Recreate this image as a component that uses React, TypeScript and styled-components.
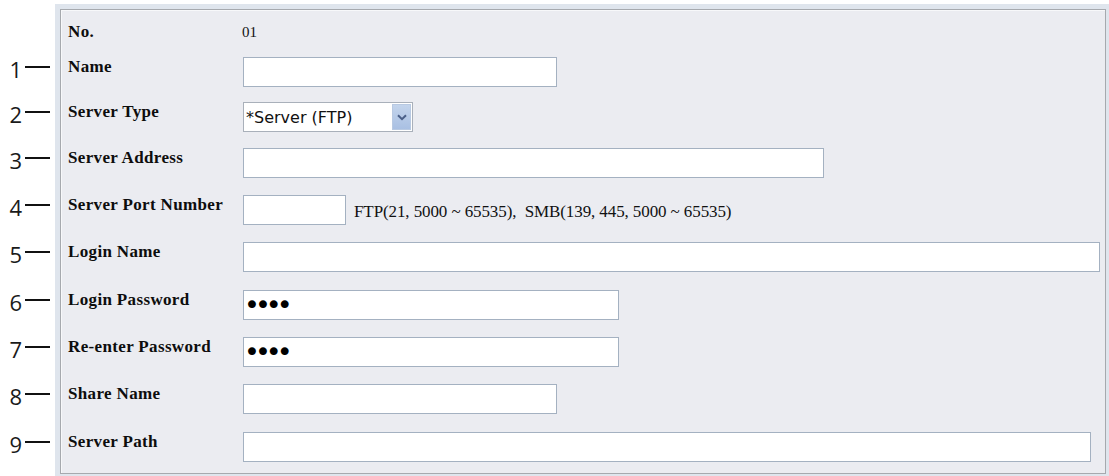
import React from "react";
import styled, { createGlobalStyle } from "styled-components";

const GlobalStyle = createGlobalStyle`
  html, body { margin: 0; padding: 0; background: #ffffff; }
  body { width: 1109px; height: 476px; overflow: hidden; }
  * { box-sizing: border-box; }
`;

type Kind = "text" | "select" | "password";

interface RowData {
  n: number;
  label: string;
  kind: Kind;
  width: number;
  h: number;
  value?: string;
  hint?: string;
}

const rows: RowData[] = [
  { n: 1, label: "Name", kind: "text", width: 314, h: 45 },
  { n: 2, label: "Server Type", kind: "select", width: 170, h: 46 },
  { n: 3, label: "Server Address", kind: "text", width: 581, h: 47 },
  {
    n: 4,
    label: "Server Port Number",
    kind: "text",
    width: 103,
    h: 47,
    hint: "FTP(21, 5000 ~ 65535),  SMB(139, 445, 5000 ~ 65535)",
  },
  { n: 5, label: "Login Name", kind: "text", width: 857, h: 48 },
  { n: 6, label: "Login Password", kind: "password", width: 376, h: 47, value: "pass" },
  { n: 7, label: "Re-enter Password", kind: "password", width: 376, h: 47, value: "pass" },
  { n: 8, label: "Share Name", kind: "text", width: 314, h: 48 },
  { n: 9, label: "Server Path", kind: "text", width: 848, h: 30 },
];

const Page = styled.div`
  display: flex;
  align-items: flex-start;
  width: 1109px;
  height: 476px;
`;

const MarkerColumn = styled.div`
  width: 55px;
  flex: none;
  padding-top: 57px;
  display: flex;
  flex-direction: column;
`;

const Marker = styled.div<{ $h: number }>`
  height: ${(p) => p.$h}px;
  display: flex;
  align-items: flex-start;
  justify-content: flex-end;
  padding-right: 5px;
`;

const MarkerInner = styled.div`
  height: 20px;
  display: flex;
  align-items: center;
  gap: 4px;
`;

const MarkerNum = styled.span`
  font-family: "Open Sans", "Noto Sans", sans-serif;
  font-size: 22px;
  line-height: 24px;
  color: #1a1a1a;
  margin-top: 3px;
  margin-right: -1px;
`;

const Dash = styled.span`
  display: block;
  width: 25px;
  height: 2px;
  background: #111111;
`;

const Frame = styled.div`
  flex: 1;
  margin-top: 4px;
  padding: 5px 3px 3px 5px;
  background: #dfe5ed;
`;

const Panel = styled.div`
  height: 465px;
  background: #ebecf1;
  border: 1px solid #a6a9ae;
  box-shadow: inset 1px 1px 0 #f7f8fa;
  padding: 12px 0 0 7px;
  display: flex;
  flex-direction: column;
`;

const Row = styled.div<{ $h: number }>`
  height: ${(p) => p.$h}px;
  display: grid;
  grid-template-columns: 175px 1fr;
  align-items: start;
`;

const Label = styled.div`
  font-family: "Liberation Serif", "Times New Roman", serif;
  font-weight: bold;
  font-size: 17px;
  line-height: 20px;
  letter-spacing: 0.35px;
  color: #0d0d0d;
  white-space: nowrap;
`;

const Value = styled.div`
  font-family: "Liberation Serif", "Times New Roman", serif;
  font-size: 15px;
  line-height: 20px;
  color: #111111;
  margin-left: -1px;
`;

const Field = styled.div`
  display: flex;
  align-items: center;
  gap: 8px;
`;

const TextInput = styled.input<{ $w: number }>`
  width: ${(p) => p.$w}px;
  height: 30px;
  margin: 0;
  padding: 0 3px;
  background: #ffffff;
  border: 1px solid #a4b1c1;
  border-radius: 0;
  outline: none;
  font-family: "DejaVu Sans", sans-serif;
  font-size: 14px;
  color: #000;
`;

const PasswordInput = styled(TextInput)`
  font-family: "DejaVu Sans", sans-serif;
  font-size: 27px;
  letter-spacing: -5px;
  padding: 0 0 2px 0;
  line-height: 26px;
`;

const Hint = styled.span`
  font-family: "Liberation Serif", "Times New Roman", serif;
  font-size: 17px;
  color: #111111;
  white-space: pre;
  margin-top: 3px;
  letter-spacing: -0.1px;
`;

const SelectWrap = styled.div<{ $w: number }>`
  position: relative;
  width: ${(p) => p.$w}px;
  height: 30px;
`;

const SelectBox = styled.select`
  appearance: none;
  -webkit-appearance: none;
  width: 100%;
  height: 100%;
  margin: 0;
  padding: 0 24px 0 2px;
  background: #ffffff;
  border: 1px solid #a9b0ba;
  border-radius: 0;
  outline: none;
  font-family: "DejaVu Sans", sans-serif;
  font-size: 16px;
  color: #111;
`;

const ArrowBtn = styled.div`
  position: absolute;
  top: 2px;
  right: 2px;
  width: 19px;
  height: 26px;
  background: linear-gradient(#c3d4ec, #a9c0e3);
  border: 1px solid #b8c9e2;
  display: flex;
  align-items: center;
  justify-content: center;
  pointer-events: none;
`;

function Chevron() {
  return (
    <svg width="10" height="7" viewBox="0 0 10 7">
      <path d="M1 1.2 L5 5.2 L9 1.2" fill="none" stroke="#4a5f88" strokeWidth="2" />
    </svg>
  );
}

function Control({ r }: { r: RowData }) {
  if (r.kind === "select") {
    return (
      <SelectWrap $w={r.width}>
        <SelectBox defaultValue="ftp">
          <option value="ftp">*Server (FTP)</option>
          <option value="smb">Server (SMB)</option>
        </SelectBox>
        <ArrowBtn>
          <Chevron />
        </ArrowBtn>
      </SelectWrap>
    );
  }
  if (r.kind === "password") {
    return <PasswordInput $w={r.width} type="password" defaultValue={r.value} />;
  }
  return (
    <Field>
      <TextInput $w={r.width} type="text" defaultValue="" />
      {r.hint && <Hint>{r.hint}</Hint>}
    </Field>
  );
}

export default function App() {
  return (
    <>
      <GlobalStyle />
      <Page>
        <MarkerColumn>
          {rows.map((r) => (
            <Marker key={r.n} $h={r.h}>
              <MarkerInner>
                <MarkerNum>{r.n}</MarkerNum>
                <Dash />
              </MarkerInner>
            </Marker>
          ))}
        </MarkerColumn>
        <Frame>
          <Panel>
            <Row $h={35}>
              <Label>No.</Label>
              <Value>01</Value>
            </Row>
            {rows.map((r) => (
              <Row key={r.n} $h={r.h}>
                <Label>{r.label}</Label>
                <Control r={r} />
              </Row>
            ))}
          </Panel>
        </Frame>
      </Page>
    </>
  );
}
